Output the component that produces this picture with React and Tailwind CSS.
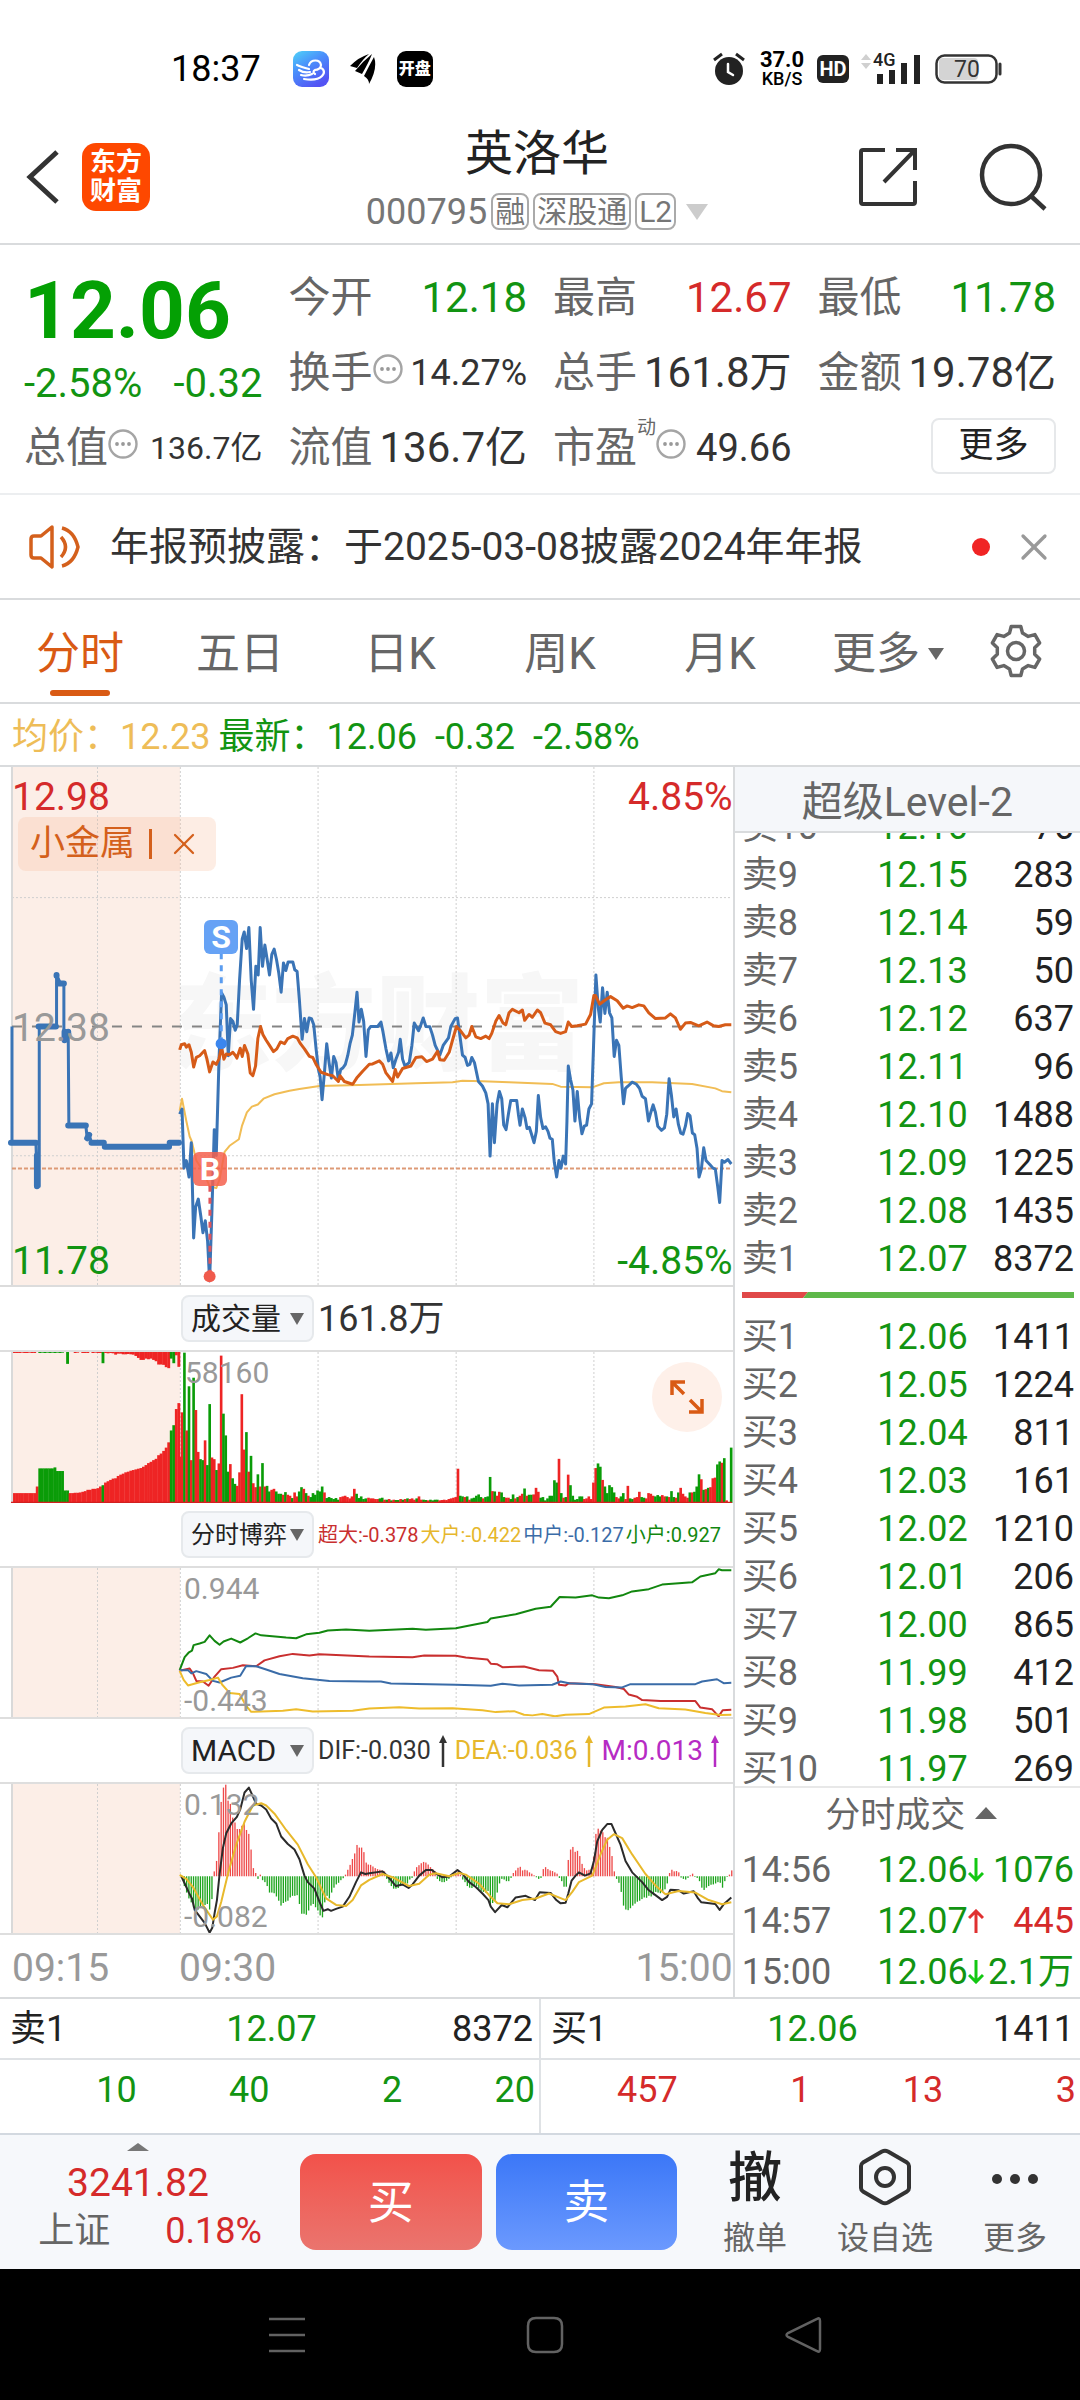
import { X } from "lucide-react";
import { clsx } from "clsx";

const asks = [
  ["卖10", "12.16", "76"],
  ["卖9", "12.15", "283"],
  ["卖8", "12.14", "59"],
  ["卖7", "12.13", "50"],
  ["卖6", "12.12", "637"],
  ["卖5", "12.11", "96"],
  ["卖4", "12.10", "1488"],
  ["卖3", "12.09", "1225"],
  ["卖2", "12.08", "1435"],
  ["卖1", "12.07", "8372"],
];

const bids = [
  ["买1", "12.06", "1411"],
  ["买2", "12.05", "1224"],
  ["买3", "12.04", "811"],
  ["买4", "12.03", "161"],
  ["买5", "12.02", "1210"],
  ["买6", "12.01", "206"],
  ["买7", "12.00", "865"],
  ["买8", "11.99", "412"],
  ["买9", "11.98", "501"],
  ["买10", "11.97", "269"],
];

const trades = [
  { time: "14:56", price: "12.06", up: false, volume: "1076" },
  { time: "14:57", price: "12.07", up: true, volume: "445" },
  { time: "15:00", price: "12.06", up: false, volume: "2.1万" },
];

const tabs = ["分时", "五日", "日K", "周K", "月K"];

// All chart series share a horizontal scale of three units per pixel.
const preMarket =
  "36,775 36,1113 108,1113 112,1240 118,1240 118,775 170,775 170,625 182,650 192,650 192,815 205,790 207,1063 258,1063 262,1100 268,1090 275,1113 312,1113 315,1125 508,1125 512,1113 540,1113";

const preMarketSteps =
  "M33 1113H108 M111 1150V1240 M116 775H168 M170 625V627 M176 650H192 M194 815V790 M205 790V795 M205 1063H258 M262 1100L268 1090 M275 1113H312 M315 1125H508 M510 1113H538";

const price =
  "540,1030 547,1015 553,1187 560,1165 568,1213 575,1113 582,1390 588,1300 596,1277 604,1330 610,1375 617,1340 624,1400 630,1515 637,1310 644,1075 650,1150 658,880 666,677 673,690 680,712 686,860 693,752 700,760 707,786 713,770 720,640 728,520 734,500 741,548 748,487 755,640 762,725 769,600 776,625 782,487 789,600 796,538 803,580 810,625 817,565 824,550 831,580 838,620 845,675 852,590 859,612 866,587 880,587 886,610 893,615 900,700 908,812 915,752 922,790 929,750 936,752 943,770 950,840 957,900 962,920 968,988 975,910 982,825 989,880 996,925 1003,862 1010,880 1017,930 1024,900 1031,895 1038,885 1045,860 1052,825 1059,800 1066,740 1073,675 1079,762 1086,725 1093,760 1100,862 1107,785 1114,775 1135,775 1145,762 1151,790 1160,840 1168,875 1175,852 1182,895 1190,870 1198,850 1203,812 1210,870 1217,890 1230,880 1238,830 1245,765 1258,787 1265,770 1272,750 1280,775 1292,776 1300,800 1308,830 1322,858 1332,830 1348,808 1355,775 1368,752 1375,750 1382,800 1390,858 1398,865 1405,888 1412,885 1418,865 1426,880 1438,935 1450,948 1460,968 1467,1000 1473,1152 1480,1000 1486,1113 1494,1000 1501,964 1508,985 1514,1062 1521,1075 1528,1030 1535,990 1553,990 1558,1030 1563,1062 1570,1015 1578,1040 1584,1072 1591,1068 1598,1090 1605,1113 1612,1080 1618,976 1625,1040 1632,1072 1640,1067 1647,1080 1653,1100 1660,1103 1666,1170 1673,1213 1680,1165 1686,1187 1693,1152 1700,1175 1704,1050 1708,890 1715,930 1722,960 1728,1050 1735,964 1742,1040 1749,1087 1756,1065 1763,1062 1770,1015 1778,1000 1784,830 1791,625 1798,720 1804,762 1811,662 1818,737 1825,675 1832,735 1839,750 1846,862 1853,815 1860,830 1867,920 1874,1000 1880,955 1888,948 1900,937 1913,943 1922,955 1930,978 1940,985 1949,1050 1956,1025 1963,1003 1970,1025 1977,1065 1988,1077 1997,1070 2004,1030 2011,927 2018,975 2025,1038 2032,1015 2039,1060 2046,1085 2053,1088 2060,1065 2067,1028 2074,1035 2081,1085 2088,1090 2095,1130 2101,1213 2108,1190 2115,1128 2122,1165 2134,1177 2143,1187 2150,1190 2157,1240 2163,1287 2170,1165 2177,1170 2188,1162 2198,1175";

const sector =
  "540,843 545,828 555,825 560,835 568,828 575,850 582,893 590,865 600,860 615,845 622,870 630,907 640,878 650,885 658,870 666,835 673,870 680,855 690,857 700,850 708,860 712,867 722,838 728,862 735,830 745,855 752,910 760,918 768,890 775,810 783,775 790,798 800,815 810,830 822,848 832,840 843,820 855,825 865,810 880,803 893,808 903,825 915,840 930,862 940,865 950,885 965,908 985,915 1000,918 1017,935 1022,918 1035,935 1060,943 1072,925 1090,905 1110,885 1120,884 1140,875 1150,885 1160,910 1180,935 1188,900 1195,922 1210,897 1235,890 1250,865 1268,863 1282,877 1300,870 1315,847 1322,872 1335,873 1350,850 1360,815 1372,775 1382,785 1400,808 1410,800 1418,775 1430,805 1445,810 1460,803 1470,810 1478,795 1490,760 1500,743 1512,765 1520,770 1530,735 1540,725 1560,735 1570,727 1577,757 1590,740 1600,748 1615,727 1625,735 1638,765 1655,770 1670,790 1685,795 1700,790 1708,762 1718,775 1735,773 1760,768 1775,740 1785,685 1790,685 1802,710 1820,697 1835,688 1855,700 1873,722 1885,715 1900,720 1920,712 1935,715 1950,735 1970,752 2000,750 2015,738 2030,750 2045,783 2060,765 2075,763 2100,773 2125,762 2145,773 2160,775 2180,770 2198,770";

const average =
  "540,1020 547,985 553,1015 560,1050 570,1095 576,1108 590,1165 610,1195 630,1240 650,1245 660,1220 675,1140 690,1122 718,1103 727,1065 742,1025 757,1008 775,1002 792,985 825,972 870,962 900,957 960,948 1080,945 1250,940 1360,937 1390,933 1450,934 1530,937 1660,942 1685,950 1780,952 1815,940 1860,937 1960,937 2080,942 2150,955 2170,963 2198,966";

// r = rising bar, g = falling bar, followed by its height.
const preVolume =
  "r30 r30 r30 r30 r30 r30 r30 r30 r30 r50 g105 g105 g105 g105 g105 g105 g108 g97 g97 g97 g38 g38 r30 r30 r31 r31 r32 r34 r36 r40 r40 r43 r43 r45 r50 g54 r62 r66 r70 r74 r75 r82 r86 r89 r93 r95 r98 r100 r102 r104 r106 r110 r115 r121 r125 r130 r134 r145 r150 r158 r168 r184 g220 g236 r285 r303";

const preUnmatched =
  "r3 r3 r3 r2 r3 r3 r2 r3 r3 r0 g3 g2 g3 g2 g3 g2 g3 g2 g3 g2 g0 g36 r0 r0 r3 r2 r0 r3 r3 r3 r0 r3 r2 r3 r3 g34 r3 r4 r3 r4 r8 r5 r5 r7 r7 r6 r7 r8 r12 r18 r24 r24 r20 r22 r20 r24 r28 r38 r38 r39 r46 r49 g20 g34 r10 r45";

const volume = [
  [
    540,
    "r140 r275 g456 r220 g354 r130 g380 r282 r155 g133 g130 r190 g115 g300 r138 r133 g100 r120 r447 g271 g205 g95 r118 g75 g58 r52 r93 r330 r162 g215 r95 g143 r60 r48 g87 r50 g121 r50 g52 g35 r40 r43 g35 g28 g28 r25 g33 r25 r22 g15 r32 r20 g35 g48 r43 g30 r22 g18 g30 g25 g38 g35 g50 r32 g15 g18 g15 g12 g15 g10 r18 r20 r22 r18 r14 r20 r43 g28 g15 g20 g12 g14",
  ],
  [
    1107,
    "r16 r14 r14 r12 r12 g14 g16 r10 g10 r12 g8 r10 g9 g9 r12 g10 r12 g14 r12 r14 r10 g14 r20 r10 g10 g9 r8 g10 g8 g10 g10 r8 r9 r10 r9 r12 r14 r16 r18",
  ],
  [
    1376,
    "r104 g22 g20 r18 g20 r10 g14 g16 g22 g26 g18 r14 g18 g20 g79 r36 g35 r22 r34 g32 g18 r16 r16 g12 g26 r14 g18 r22 r28 g44 r22 g25 g25 r26 r46 r34 g16 g18 g8 g14 g22 g22 g69 g62 r134 g30 r16 g18 r86 g54 g22 g10 g12 g20 g20 r12 r14 r20 r12 r62 r106 g120 g110 r70 g50 g30 g54 g48 g32 r18 r14 g20 g30 r12 r52 g14 g12 r16 r18 r34 g18 g16 r14 r30 r28 r22 g20 g24 g20 r24 r20 g20 r18 g36 g18 r16 g32 r46 r28 r20 r16 g32 r32 g34 g50 g87 r72 g40 r42 g46 r48 r75 r77 g117 g126 r122 g136 r8 r0 g168",
  ],
];

const macdBars = [
  [
    554,
    "-30 -50 -68 -80 -95 -100 -102 -95 -90 -88 -85 -102 -70 15 47 135 228 272 281 232 222 180 165 145 145 155 160 142 130 82 25 10 -8 5 -12 -18 -30 -50 -50 -52 -62 -75 -90 -82 -78 -75 -65 -60 -60 -58 -85 -115 -115 -118 -105 -90 -85 -95 -105 -120 -126 -80 -60 -68 -50 -35 -25 -20 -12 -6 5 20 35 53 70 96 88 88 74 42",
  ],
  [
    1107,
    "36 35 30 25 22 20 18 15 -8 -20 -30 -38 -38 -36 -30 -28 -22 -22 -10 -5 15 28 34 40 44 42 36 28 22 15 -8 -15 -18 -18 -14 -8 -3 3 10 15 5 -10 -18 -30 -35 -36 -32 -30 -38 -45 -48 -50 -45 -90 -82 -75 -50 -22 -8 -10 -15 -15 -5 10 18 26 29 18 20 18 12 8 3 -3 -8 -5 22 28 22 18 16 12 8 -5 -15 -32 -32",
  ],
  [
    1708,
    "50 82 90 75 78 62 38 25 18 20 22 60 130 146 140 135 120 118 90 62 15 -8 -20 -48 -90 -102 -104 -98 -90 -84 -78 -75 -70 -65 -66 -60 -62 -58 -48 -50 -52 -46 -40 -22 10 20 15 16 12 -4 -8 -10 -5 3 8 -2 -5 -15 -35 -42 -35 -30 -26 -25 -22 -18 -20 -35 -15 -2 5 18 25 28",
  ],
];

const dif =
  "545,467 560,500 568,518 577,535 585,570 600,590 615,610 630,640 638,625 645,580 652,540 660,460 670,380 680,335 695,305 712,285 722,262 735,210 748,195 757,215 770,245 785,250 800,262 815,290 830,305 845,345 865,368 885,385 900,415 915,465 925,485 945,505 960,545 972,573 985,568 995,573 1010,567 1030,560 1050,530 1070,485 1085,455 1098,460 1110,458 1150,452 1165,467 1190,497 1210,492 1228,503 1240,492 1260,465 1280,448 1298,448 1315,462 1330,470 1350,468 1375,448 1390,460 1410,485 1430,500 1450,520 1468,540 1475,560 1488,577 1508,555 1525,562 1550,532 1580,527 1608,540 1622,516 1655,518 1672,540 1685,550 1700,548 1708,520 1718,480 1730,465 1740,455 1758,465 1775,458 1785,420 1795,360 1810,325 1825,307 1838,307 1850,335 1865,370 1880,420 1900,455 1930,485 1950,510 1970,525 1990,540 2005,530 2015,508 2040,510 2055,520 2085,513 2098,535 2108,547 2150,552 2163,570 2175,553 2198,532";

const dea =
  "540,463 560,475 580,500 610,555 640,600 652,590 665,545 685,460 710,370 735,300 760,250 785,243 800,250 825,275 860,325 895,370 925,430 950,470 980,535 1010,555 1040,558 1060,540 1085,495 1110,478 1150,460 1180,470 1230,497 1260,490 1290,462 1310,458 1350,467 1380,457 1400,462 1440,490 1470,525 1495,550 1530,553 1570,540 1610,535 1650,520 1700,540 1720,515 1740,485 1780,465 1790,440 1805,400 1825,355 1845,338 1870,350 1900,400 1940,460 1970,495 2000,522 2040,512 2090,517 2130,540 2170,553 2198,547";

const holders = [
  {
    color: "#12870f",
    points:
      "540,1155 555,1115 568,1100 577,1095 582,1078 600,1073 615,1068 630,1048 645,1065 660,1077 672,1067 695,1058 722,1070 745,1057 768,1042 785,1048 860,1055 890,1057 920,1045 960,1040 985,1033 1040,1030 1110,1034 1240,1028 1280,1031 1370,1026 1400,1020 1465,1007 1475,996 1550,983 1610,966 1655,960 1682,930 1730,932 1780,925 1800,932 1830,934 1870,925 1900,913 1950,906 1990,892 2080,885 2105,867 2150,857 2160,845 2170,848 2198,848",
  },
  {
    color: "#c92f2f",
    points:
      "540,1157 570,1150 580,1165 590,1188 610,1190 627,1203 645,1175 665,1152 700,1148 730,1140 770,1143 795,1125 840,1112 880,1105 930,1110 960,1106 1110,1113 1240,1115 1275,1110 1370,1111 1400,1116 1465,1122 1475,1135 1495,1137 1510,1146 1575,1144 1620,1155 1662,1157 1675,1175 1680,1200 1700,1202 1710,1195 1790,1198 1850,1207 1875,1213 1890,1230 1915,1237 1930,1247 1985,1250 2090,1250 2105,1270 2140,1275 2160,1297 2172,1278 2198,1277",
  },
  {
    color: "#3a6ca8",
    points:
      "540,1155 565,1155 575,1165 590,1158 620,1167 640,1188 660,1193 695,1178 722,1172 740,1142 770,1143 800,1153 840,1167 910,1180 990,1188 1110,1190 1145,1190 1175,1196 1370,1200 1475,1203 1510,1197 1560,1202 1660,1200 1685,1190 1710,1195 1780,1198 1820,1207 1870,1208 1895,1198 2090,1198 2110,1190 2155,1183 2175,1195 2198,1194",
  },
  {
    color: "#eebc2c",
    points:
      "540,1157 552,1185 565,1202 600,1192 630,1185 655,1178 668,1200 690,1225 720,1228 740,1265 755,1283 850,1280 890,1275 940,1282 1060,1280 1110,1273 1200,1269 1260,1273 1360,1272 1450,1278 1490,1284 1545,1281 1575,1292 1600,1294 1630,1290 1668,1297 1700,1292 1770,1290 1815,1270 1880,1267 1940,1260 1980,1272 2060,1276 2120,1287 2165,1293 2198,1292",
  },
];

function Line({ points, color, width = 2 }) {
  return (
    <polyline
      points={points}
      fill="none"
      stroke={color}
      strokeWidth={width}
      strokeLinejoin="round"
      vectorEffect="non-scaling-stroke"
    />
  );
}

function Grid({ top, height, rows = [] }) {
  return (
    <g strokeWidth="1">
      <rect x="36" y={top} width="505" height={height} fill="#fceee7" />
      {[293, 542, 956, 1371, 1785].map((x) => (
        <line key={x} x1={x} x2={x} y1={top} y2={top + height} stroke="#cfcfcf" strokeDasharray="2 2" vectorEffect="non-scaling-stroke" />
      ))}
      {rows.map((y) => (
        <line key={y} x1="36" x2="2200" y1={y} y2={y} stroke="#cfcfcf" strokeDasharray="2 2" vectorEffect="non-scaling-stroke" />
      ))}
      <line x1="36" x2="36" y1={top} y2={top + height} stroke="#d9d9d9" strokeWidth="2" vectorEffect="non-scaling-stroke" />
    </g>
  );
}

function Plot({ top, height, className, rows, children }) {
  return (
    <svg
      viewBox={`0 ${top} 2202 ${height}`}
      preserveAspectRatio="none"
      className={clsx("relative block w-full", className)}
      aria-hidden="true"
    >
      <Grid top={top} height={height} rows={rows} />
      {children}
    </svg>
  );
}

function Bars({ start, step, data, base, down = false }) {
  return data.split(" ").map((item, i) => {
    const h = Number(item.slice(1));
    return (
      <rect
        key={i}
        x={start + i * step - step / 2}
        y={down ? base : base - h}
        width={step + 1}
        height={h}
        fill={item[0] === "r" ? "#ee2424" : "#0a9c08"}
      />
    );
  });
}

function Triangle({ className, up = false }) {
  return (
    <svg viewBox="0 0 14 10" preserveAspectRatio="none" className={className} fill="currentColor" aria-hidden="true">
      <path d={up ? "M7 0L14 10H0Z" : "M0 0H14L7 10Z"} />
    </svg>
  );
}

function Dots() {
  return (
    <svg viewBox="0 0 30 30" className="mb-2 size-[30px] shrink-0" aria-hidden="true">
      <circle cx="15" cy="15" r="13.5" fill="none" stroke="#a5a5a5" strokeWidth="2.4" />
      <circle cx="9" cy="15" r="1.9" fill="#999" />
      <circle cx="15" cy="15" r="1.9" fill="#999" />
      <circle cx="21" cy="15" r="1.9" fill="#999" />
    </svg>
  );
}

function StatusBar() {
  return (
    <div className="flex h-[110px] items-center justify-between pt-7 pr-[78px] pl-[171px] text-black">
      <div className="flex items-center gap-5">
        <span className="text-[36px] leading-9">18:37</span>
        <div className="flex items-center gap-5 pl-3">
          <svg viewBox="0 0 36 36" className="size-9" aria-hidden="true">
            <defs>
              <linearGradient id="cloud" x1="0" y1="0" x2="0.6" y2="1">
                <stop offset="0" stopColor="#4fd3f8" />
                <stop offset="0.45" stopColor="#4a90fb" />
                <stop offset="1" stopColor="#5353f4" />
              </linearGradient>
            </defs>
            <rect width="36" height="36" rx="9" fill="url(#cloud)" />
            <path
              d="M4 14C8 16 12 17 16 18M6 19C9 21 13 22 17 21M8 24C12 25 15 25 19 23M11 28C17 29 25 29 29 25 33 21 30 17 27 17M16 14C18 8 27 8 28 14 28 17 25 19 22 19M22 19C20 20 20 22 22 23"
              fill="none"
              stroke="#fff"
              strokeWidth="2.2"
              strokeLinecap="round"
            />
          </svg>
          <svg viewBox="0 0 28 30" className="h-[30px] w-7" aria-hidden="true">
            <path d="M1 12Q10 3 20 0Q14 5 8 14Z M6 17Q13 8 23 0Q20 8 13 20Z M15 22Q20 12 25 3Q29 14 20 30Q20 25 15 22Z" />
          </svg>
          <span className="flex size-9 items-center justify-center rounded-[9px] bg-black text-[16px] leading-4 font-black text-white">
            开盘
          </span>
        </div>
      </div>
      <div className="flex items-center text-[#222]">
        <svg viewBox="0 0 32 34" className="h-[34px] w-8" fill="none" aria-hidden="true">
          <circle cx="16" cy="19" r="14" fill="#222" />
          <path d="M1 8L9 2M31 8L23 2" stroke="#222" strokeWidth="3" />
          <path d="M15 12V20L20 23" stroke="#fff" strokeWidth="2.5" strokeLinecap="round" />
        </svg>
        <div className="ml-3 w-[50px] text-center text-black">
          <p className="text-[22px] leading-[20px] font-bold">37.0</p>
          <p className="text-[18px] leading-[18px] font-medium">KB/S</p>
        </div>
        <span className="ml-2.5 flex h-7 w-8 items-center justify-center rounded-md bg-[#222] text-[20px] leading-5 font-bold text-white">
          HD
        </span>
        <div className="relative ml-3 h-[30px] w-[60px]">
          <svg viewBox="0 0 60 30" className="block h-[30px] w-[60px]" aria-hidden="true">
            <path d="M0 6L5 0L10 6Z M0 9H10L5 15Z" fill="#d0d0d0" />
            <path d="M19 20V30M31 16V30M43 9V30M56 1V30" stroke="#222" strokeWidth="6" />
          </svg>
          <span className="absolute -top-1 left-3 text-[18px] leading-5 font-medium">4G</span>
        </div>
        <svg viewBox="0 0 67 30" className="ml-3.5 h-[30px] w-[67px]" aria-hidden="true">
          <rect x="4" y="4" width="39" height="22" rx="4" fill="#d4d4d4" />
          <rect x="1.5" y="1.5" width="60" height="27" rx="8" fill="none" stroke="#333" strokeWidth="2.5" />
          <path d="M65 10V20" stroke="#333" strokeWidth="3" strokeLinecap="round" />
          <text x="32" y="23" textAnchor="middle" fontSize="23" fill="#333">
            70
          </text>
        </svg>
      </div>
    </div>
  );
}

function Header() {
  return (
    <header className="flex h-[135px] items-center border-b-2 border-[#d9dbdd] px-[26px]">
      <div className="flex flex-1 items-center gap-[22px]">
        <button aria-label="返回">
          <svg viewBox="0 0 34 54" className="h-[54px] w-[34px]" fill="none" stroke="#333" strokeWidth="5" aria-hidden="true">
            <path d="M31 2L4 27L31 52" />
          </svg>
        </button>
        <div className="flex size-[68px] flex-col items-center justify-center rounded-[14px] bg-[#fe4800] text-[26px] leading-[29px] font-bold text-white">
          <span>东方</span>
          <span>财富</span>
        </div>
      </div>
      <div className="flex flex-col items-center pt-3">
        <h1 className="text-[48px] leading-[58px] text-[#222]">英洛华</h1>
        <div className="flex h-[58px] items-center gap-1 text-[#767676]">
          <span className="text-[36px] leading-9">000795</span>
          {["融", "深股通", "L2"].map((tag) => (
            <span key={tag} className="flex h-[37px] items-center rounded-lg border-2 border-[#aaa] px-0.5 text-[30px] leading-8">
              {tag}
            </span>
          ))}
          <Triangle className="ml-1.5 h-4 w-[22px] text-[#ccc]" />
        </div>
      </div>
      <div className="flex flex-1 items-center justify-end gap-[60px] pr-1.5">
        <button aria-label="分享">
          <svg viewBox="0 0 60 60" className="size-[60px]" fill="none" stroke="#333" strokeWidth="4" aria-hidden="true">
            <path d="M27 3H5Q3 3 3 5V55Q3 57 5 57H55Q57 57 57 55V34M38 3H57V23M57 3L26 35" />
          </svg>
        </button>
        <button aria-label="搜索">
          <svg viewBox="0 0 70 70" className="size-[70px]" fill="none" stroke="#333" strokeWidth="4.5" aria-hidden="true">
            <circle cx="33" cy="33" r="29" />
            <path d="M53 54L67 67" />
          </svg>
        </button>
      </div>
    </header>
  );
}

function Stat({ label, value, color = "text-[#333]", size = "text-[42px]", hint = false, sup }) {
  return (
    <div className="flex h-[75px] items-center justify-between">
      <span className="flex items-center text-[42px] leading-[50px] whitespace-nowrap text-[#666]">
        {label}
        {sup && <sup className="-top-5 text-[19px] leading-5">{sup}</sup>}
        {hint && <Dots />}
      </span>
      <span className={clsx("leading-[50px] whitespace-nowrap", color, size)}>{value}</span>
    </div>
  );
}

function Quote() {
  return (
    <section className="grid grid-cols-4 gap-x-[26px] border-b-2 border-[#eceef0] px-6 pt-[15px] pb-2">
      <div>
        <p className="h-[98px] text-[80px] leading-[102px] font-bold text-[#04a004]">12.06</p>
        <p className="flex h-[52px] items-center justify-between text-[40px] text-[#129412]">
          <span>-2.58%</span>
          <span>-0.32</span>
        </p>
        <Stat label="总值" value="136.7亿" size="text-[32px]" hint />
      </div>
      <div>
        <Stat label="今开" value="12.18" color="text-[#129412]" />
        <Stat label="换手" value="14.27%" size="text-[36px]" hint />
        <Stat label="流值" value="136.7亿" />
      </div>
      <div>
        <Stat label="最高" value="12.67" color="text-[#d52a2a]" />
        <Stat label="总手" value="161.8万" />
        <Stat label="市盈" sup="动" value="49.66" size="text-[38px]" hint />
      </div>
      <div>
        <Stat label="最低" value="11.78" color="text-[#129412]" />
        <Stat label="金额" value="19.78亿" />
        <div className="flex h-[72px] items-center justify-end">
          <button className="h-14 w-[125px] rounded-lg border-2 border-[#e6e8ea] text-[35px] leading-10 text-[#222]">更多</button>
        </div>
      </div>
    </section>
  );
}

function Notice() {
  return (
    <div className="flex h-[105px] items-center border-b-2 border-[#d9dbdd] pr-6 pl-7">
      <svg viewBox="0 0 54 44" className="h-11 w-[54px]" fill="none" stroke="#d4601c" strokeWidth="3.5" aria-hidden="true">
        <path d="M24 2L13 11H6Q3 11 3 14V30Q3 33 6 33H13L24 42Z" strokeLinejoin="round" />
        <path d="M33 12Q42 22 33 32M34 3Q46 6 50 22Q46 38 34 41" />
      </svg>
      <p className="ml-7 flex-1 text-[39px] leading-[50px] whitespace-nowrap text-[#333]">年报预披露：于2025-03-08披露2024年年报</p>
      <span className="size-[18px] rounded-full bg-[#f02424]" />
      <button aria-label="关闭" className="ml-[22px]">
        <X className="size-[44px] text-[#999]" strokeWidth={1.8} />
      </button>
    </div>
  );
}

const gear = Array.from({ length: 6 }, (_, i) =>
  [
    [-20, 19],
    [-11, 25],
    [11, 25],
    [20, 19],
  ].map(([offset, r]) => {
    const a = ((i * 60 - 90 + offset) * Math.PI) / 180;
    return `${(27 + r * Math.cos(a)).toFixed(1)},${(27 + r * Math.sin(a)).toFixed(1)}`;
  })
)
  .flat()
  .join(" ");

function Tabs() {
  return (
    <nav className="flex h-[104px] items-stretch border-b-2 border-[#d9dbdd] text-[44px] leading-[50px] text-[#666]">
      {tabs.map((tab, i) => (
        <button key={tab} className={clsx("relative flex-[4] pt-1.5", i === 0 && "text-[#d95a14]")}>
          {tab}
          {i === 0 && <span className="absolute bottom-1.5 left-1/2 h-1.5 w-[60px] -translate-x-1/2 rounded-full bg-[#d95a14]" />}
        </button>
      ))}
      <button className="flex flex-[4] items-center justify-center gap-2 pt-1.5">
        <span className="ml-4">更多</span>
        <Triangle className="h-3 w-4" />
      </button>
      <button className="flex flex-[3] items-center justify-center" aria-label="设置">
        <svg viewBox="0 0 54 54" className="mr-2 size-[54px]" fill="none" stroke="#666" strokeWidth="3.5" strokeLinejoin="round" aria-hidden="true">
          <polygon points={gear} />
          <circle cx="27" cy="27" r="8.5" />
        </svg>
      </button>
    </nav>
  );
}

function PaneHeader({ label, small = false, children }) {
  return (
    <div className="flex h-[63px] items-center gap-1 pl-[181px] whitespace-nowrap">
      <button className="flex h-[47px] w-[133px] shrink-0 items-center justify-between rounded-lg border-2 border-[#e6e9ec] bg-[#f5f7fa] px-2 text-[#222]">
        <span className={clsx("leading-9", small ? "text-[24px]" : "text-[30px]")}>{label}</span>
        <Triangle className="h-3 w-3.5 text-[#666]" />
      </button>
      {children}
    </div>
  );
}

function ArrowUp() {
  return (
    <svg viewBox="0 0 10 32" className="mx-[7px] h-8 w-2.5" aria-hidden="true">
      <path d="M5 0L9 8H1Z" fill="currentColor" />
      <path d="M5 6V32" stroke="currentColor" strokeWidth="2.5" />
    </svg>
  );
}

function PriceChart() {
  return (
    <div className="relative border-b-2 border-[#dcdcdc] text-[39px] leading-10">
      <span className="absolute top-[200px] left-[168px] text-[104px] leading-[120px] font-black text-[#f7f7f7]">东方财富</span>
      <Plot top={20} height={1507} rows={[400, 1151]} className="h-[518px]">
        <line x1="36" x2="2200" y1="775" y2="775" stroke="#858585" strokeWidth="2" strokeDasharray="10 10" vectorEffect="non-scaling-stroke" />
        <line x1="36" x2="2200" y1="1188" y2="1188" stroke="#dd9a76" strokeWidth="2" strokeDasharray="4 2" vectorEffect="non-scaling-stroke" />
        <Line points={average} color="#f1bd55" />
        <Line points={preMarket} color="#3a74b6" width={3} />
        <path d={preMarketSteps} fill="none" stroke="#3a74b6" strokeWidth="6" strokeLinecap="round" vectorEffect="non-scaling-stroke" />
        <Line points={price} color="#3a74b6" width={3} />
        <Line points={sector} color="#d65b18" width={3} />
        <line x1="665" x2="665" y1="562" y2="825" stroke="#5a9cf0" strokeWidth="3" strokeDasharray="6 6" vectorEffect="non-scaling-stroke" />
        <ellipse cx="665" cy="825" rx="17" ry="16" fill="#3b86ee" />
        <line x1="631" x2="631" y1="1238" y2="1500" stroke="#e0555a" strokeWidth="3" strokeDasharray="6 6" vectorEffect="non-scaling-stroke" />
        <ellipse cx="630" cy="1502" rx="18" ry="17" fill="#f05a4c" />
      </Plot>
      <span className="absolute top-2.5 left-3 text-[#d52a2a]">12.98</span>
      <span className="absolute top-2.5 right-0 text-[#d52a2a]">4.85%</span>
      <span className="absolute top-[241px] left-3 text-[#999]">12.38</span>
      <span className="absolute bottom-1 left-3 text-[#129412]">11.78</span>
      <span className="absolute right-0 bottom-1 text-[#129412]">-4.85%</span>
      <div className="absolute top-[50px] left-[18px] flex h-[54px] w-[198px] items-center rounded-lg bg-[#f7b795]/25 pl-3 text-[35px] text-[#d4601c]">
        小金属
        <span className="mx-3.5 h-[30px] w-[3px] bg-[#d4601c]" />
        <button aria-label="移除小金属">
          <X className="size-[36px]" strokeWidth={1.5} />
        </button>
      </div>
      <span className="absolute top-[153px] left-[204px] flex size-[34px] items-center justify-center rounded-md bg-[#66a2f5] text-[32px] leading-8 font-bold text-white">S</span>
      <span className="absolute top-[385px] left-[193px] flex size-[34px] items-center justify-center rounded-md bg-[#f4604e]/85 text-[32px] leading-8 font-bold text-white">B</span>
    </div>
  );
}

function Charts() {
  return (
    <div className="min-w-0 flex-[734] border-r-2 border-[#d9dbdd]">
      <PriceChart />
      <PaneHeader label="成交量">
        <span className="text-[36px] leading-10 text-[#333]">161.8万</span>
      </PaneHeader>
      <div className="relative border-t-2 border-[#dedede]">
        <Plot top={193} height={458} className="h-[151px]">
          <Bars start={43} step={7.6} data={preVolume} base={651} />
          <Bars start={43} step={7.6} data={preUnmatched} base={193} down />
          {volume.map(([start, data]) => (
            <Bars key={start} start={start} step={6.9} data={data} base={651} />
          ))}
          <line x1="33" x2="2200" y1="650" y2="650" stroke="#d21f1f" strokeWidth="2" vectorEffect="non-scaling-stroke" />
        </Plot>
        <span className="absolute top-[3px] left-[185px] text-[30px] leading-9 text-[#999]">58160</span>
        <button aria-label="全屏" className="absolute top-2.5 right-[11px] flex size-[70px] items-center justify-center rounded-full bg-[#fef0e9]">
          <svg viewBox="0 0 36 36" className="size-9" fill="none" stroke="#d95a14" strokeWidth="3.5" aria-hidden="true">
            <path d="M16 3H3V16M3 3L15 15M20 33H33V20M33 33L21 21" />
          </svg>
        </button>
      </div>
      <PaneHeader label="分时博弈" small>
        <div className="flex gap-0.5 text-[20px] leading-8">
          <span className="text-[#c92f2f]">超大:-0.378</span>
          <span className="text-[#e6b72c]">大户:-0.422</span>
          <span className="text-[#3a6ca8]">中户:-0.127</span>
          <span className="text-[#12870f]">小户:0.927</span>
        </div>
      </PaneHeader>
      <div className="relative border-y-2 border-[#dedede] text-[30px] leading-9 text-[#999]">
        <Plot top={841} height={458} className="h-[149px]">
          {holders.map((h) => (
            <Line key={h.color} points={h.points} color={h.color} />
          ))}
        </Plot>
        <span className="absolute top-[3px] left-[184px]">0.944</span>
        <span className="absolute -bottom-0.5 left-[184px]">-0.443</span>
      </div>
      <PaneHeader label="MACD">
        <div className="flex items-center text-[25px] leading-9">
          <span className="text-[#333]">DIF:-0.030</span>
          <span className="text-[#333]"><ArrowUp /></span>
          <span className="text-[#e6b72c]">DEA:-0.036</span>
          <span className="text-[#e6b72c]"><ArrowUp /></span>
          <span className="text-[28px] text-[#b62bc4]">M:0.013</span>
          <span className="text-[#b62bc4]"><ArrowUp /></span>
        </div>
      </PaneHeader>
      <div className="relative border-y-2 border-[#dedede] text-[30px] leading-9 text-[#999]">
        <Plot top={184} height={457} className="h-[149px]">
          {macdBars.map(([start, data]) =>
            data.split(" ").map((v, i) => (
              <rect
                key={`${start}-${i}`}
                x={start + i * 6.92 - 2}
                y={v > 0 ? 467 - v : 467}
                width="4"
                height={Math.abs(v)}
                fill={v > 0 ? "#ee4a4a" : "#1ea51e"}
              />
            ))
          )}
          <Line points={dif} color="#2b2b2b" />
          <Line points={dea} color="#e8b92c" />
        </Plot>
        <span className="absolute top-[3px] left-[184px]">0.132</span>
        <span className="absolute -bottom-0.5 left-[184px]">-0.082</span>
      </div>
      <div className="flex h-[62px] items-center pt-1 pl-3 text-[39px] leading-10 text-[#999]">
        <span className="w-[167px]">09:15</span>
        <span className="flex-1">09:30</span>
        <span>15:00</span>
      </div>
    </div>
  );
}

function Levels({ rows }) {
  return (
    <table className="w-full table-fixed">
      <tbody>
        {rows.map(([label, value, amount]) => (
          <tr key={label} className="h-12">
            <td className="w-[30%] p-0 text-[#666]">{label}</td>
            <td className="p-0 text-right text-[#129412]">{value}</td>
            <td className="w-[32%] p-0 text-right text-[#222]">{amount}</td>
          </tr>
        ))}
      </tbody>
    </table>
  );
}

function OrderBook() {
  return (
    <aside className="min-w-0 flex-[346] text-[36px] leading-9">
      <h2 className="flex h-[66px] items-center justify-center border-b-2 border-[#d9dbdd] bg-[#f5f7fa] pt-1.5 text-[41px] leading-[50px] text-[#666]">
        超级Level-2
      </h2>
      <div className="h-[955px] overflow-hidden border-b-2 border-[#e8e8e8] pr-1.5 pl-[7px]">
        <div className="-mt-[30px]">
          <Levels rows={asks} />
          <div className="flex h-[30px] items-center pb-1.5">
            <svg viewBox="0 0 332 6" preserveAspectRatio="none" className="h-1.5 w-full" aria-hidden="true">
              <path d="M0 0H66L61 6H0Z" fill="#e04848" />
              <path d="M66 0H332V6H61Z" fill="#5eb84a" />
            </svg>
          </div>
          <Levels rows={bids} />
        </div>
      </div>
      <button className="flex h-14 w-full items-center justify-center gap-2.5 pl-2 text-[35px] leading-10 text-[#666]">
        分时成交
        <Triangle up className="mb-1.5 h-3 w-[22px]" />
      </button>
      <table className="ml-[7px] w-[calc(100%-13px)] table-fixed">
        <tbody>
          {trades.map((t) => (
            <tr key={t.time} className="h-[51px]">
              <td className="w-[30%] p-0 text-[#666]">{t.time}</td>
              <td className="p-0 text-right text-[#129412]">{t.price}</td>
              <td className={clsx("w-[32%] p-0", t.up ? "text-[#d52a2a]" : "text-[#129412]")}>
                <div className="flex items-center justify-between">
                  <svg
                    viewBox="0 0 16 24"
                    className={clsx("h-6 w-4 shrink-0", t.up ? "text-[#e03030]" : "rotate-180 text-[#12c812]")}
                    fill="none"
                    stroke="currentColor"
                    strokeWidth="3"
                    aria-hidden="true"
                  >
                    <path d="M8 24V2M1 9L8 2L15 9" />
                  </svg>
                  {t.volume}
                </div>
              </td>
            </tr>
          ))}
        </tbody>
      </table>
    </aside>
  );
}

function BestQuote({ label, value, amount, queue, color }) {
  return (
    <div className="flex-1 text-[36px] leading-10 not-first:border-l-2 not-first:border-[#dfe2e5]">
      <div className="grid h-[61px] grid-cols-3 items-center border-b-2 border-[#dfe2e5] pr-1.5 pl-2.5 text-[#222]">
        <span>{label}</span>
        <span className="text-center text-[#129412]">{value}</span>
        <span className="text-right">{amount}</span>
      </div>
      <div className={clsx("grid h-[73px] grid-cols-4 px-1 pt-2.5 text-right", color)}>
        {queue.map((n) => (
          <span key={n}>{n}</span>
        ))}
      </div>
    </div>
  );
}

function ActionBar() {
  return (
    <footer className="grid h-[136px] grid-cols-[300fr_377fr_403fr] border-t-2 border-[#d3d9e0] bg-[#f6f8fb]">
      <button className="flex flex-col items-center pt-2">
        <Triangle up className="mr-6 h-2 w-[22px] text-[#777]" />
        <span className="mt-2 mr-6 text-[39px] leading-12 text-[#d52a2a]">3241.82</span>
        <span className="flex gap-[55px] text-[36px] leading-12">
          <span className="text-[#666]">上证</span>
          <span className="text-[#d52a2a]">0.18%</span>
        </span>
      </button>
      <div className="flex items-center gap-3.5 text-[46px] text-white">
        <button className="h-24 flex-1 rounded-2xl bg-linear-to-b from-[#f2514a] to-[#ea746e]">买</button>
        <button className="h-24 flex-1 rounded-2xl bg-linear-to-b from-[#3b77f7] to-[#6b99fe]">卖</button>
      </div>
      <div className="flex justify-between pr-[33px] pl-[46px] text-[32px] leading-10 text-[#666]">
        <button className="flex flex-col items-center">
          <span className="flex h-[83px] items-center pt-1 text-[54px] leading-14 font-medium text-[#222]">撤</span>
          撤单
        </button>
        <button className="flex flex-col items-center">
          <span className="flex h-[83px] items-center">
            <svg viewBox="0 0 54 58" className="h-[58px] w-[54px]" fill="none" stroke="#333" strokeWidth="4" strokeLinejoin="round" aria-hidden="true">
              <path d="M24 3.5Q27 2 30 3.5L49 14.5Q51 16 51 18V40Q51 42 49 43.5L30 54.5Q27 56 24 54.5L5 43.5Q3 42 3 40V18Q3 16 5 14.5Z" />
              <circle cx="27" cy="29" r="9" />
            </svg>
          </span>
          设自选
        </button>
        <button className="flex flex-col items-center">
          <span className="flex h-[83px] items-center gap-2 pt-1">
            <i className="size-2.5 rounded-full bg-[#333]" />
            <i className="size-2.5 rounded-full bg-[#333]" />
            <i className="size-2.5 rounded-full bg-[#333]" />
          </span>
          更多
        </button>
      </div>
    </footer>
  );
}

function SystemNav() {
  return (
    <nav className="flex h-[132px] items-center justify-center gap-[220px] bg-black pl-2.5">
      {["M1 3H37M1 19H37M1 35H37", "M10 2H28Q36 2 36 10V28Q36 36 28 36H10Q2 36 2 28V10Q2 2 10 2Z", "M33 3Q36 1 36 5V33Q36 37 33 35L4 21Q1 19 4 17Z"].map((d, i) => (
        <button key={d} aria-label={["最近任务", "主页", "返回桌面"][i]}>
          <svg viewBox="0 0 38 38" className="size-[38px]" fill="none" stroke="#626262" strokeWidth="2.5" aria-hidden="true">
            <path d={d} />
          </svg>
        </button>
      ))}
    </nav>
  );
}

export default function App() {
  return (
    <div className="min-h-screen bg-white font-[Roboto,'Noto_Sans_CJK_SC',sans-serif]">
      <StatusBar />
      <Header />
      <Quote />
      <Notice />
      <Tabs />
      <div className="flex h-[63px] items-center border-b-2 border-[#d9dbdd] pt-1 pl-3 text-[36px] leading-10 text-[#129412]">
        <span className="text-[#eebd58]">均价：12.23</span>
        <span className="ml-2">最新：12.06</span>
        <span className="ml-[18px]">-0.32</span>
        <span className="ml-[18px]">-2.58%</span>
      </div>
      <main className="flex">
        <Charts />
        <OrderBook />
      </main>
      <section className="flex border-t-2 border-[#d9dbdd]">
        <BestQuote label="卖1" value="12.07" amount="8372" queue={[10, 40, 2, 20]} color="text-[#129412]" />
        <BestQuote label="买1" value="12.06" amount="1411" queue={[457, 1, 13, 3]} color="text-[#d52a2a]" />
      </section>
      <ActionBar />
      <SystemNav />
    </div>
  );
}
